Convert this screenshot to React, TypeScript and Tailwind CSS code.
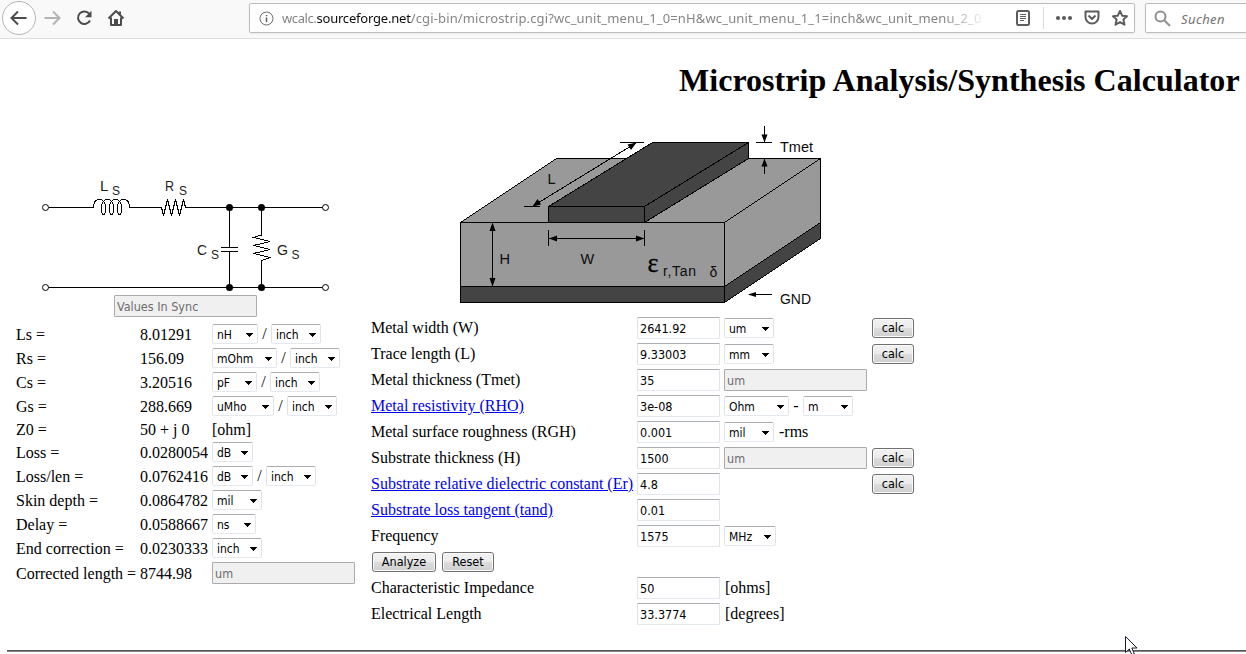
import type { ReactNode } from "react";

const SERIF = "font-['Liberation_Serif',serif]";
const UI = "font-['DejaVu_Sans_Condensed','DejaVu_Sans',sans-serif] text-[12.5px]";
const EDGE = "border border-t-[#abadb3] border-x-[#e2e3ea] border-b-[#e3e9ef]";

function Select({ value, w }: { value: string; w: string }) {
  return (
    <span className={`relative inline-block h-5 shrink-0 ${w}`}>
      <select
        defaultValue={value}
        className={`block h-5 w-full appearance-none rounded-[2px] bg-white pl-1 pt-px leading-[18px] text-black ${EDGE} ${UI} text-[12px]`}
      >
        <option>{value}</option>
      </select>
      <svg className="pointer-events-none absolute right-[5px] top-[9px]" width="7" height="4" viewBox="0 0 7 4" shapeRendering="crispEdges">
        <path d="M0 0H7V1H6V2H5V3H4V4H3V3H2V2H1V1H0Z" fill="#000" />
      </svg>
    </span>
  );
}

function Field({ value }: { value: string }) {
  return (
    <input
      defaultValue={value}
      className={`block h-[22px] w-[83px] shrink-0 rounded-[1px] bg-white px-[2px] text-black ${EDGE} ${UI}`}
    />
  );
}

function Disabled({ value }: { value: string }) {
  return (
    <input
      disabled
      defaultValue={value}
      className={`block h-[22px] w-[143px] shrink-0 rounded-[1px] border border-[#ababab] bg-[#f0f0f0] px-[2px] text-[#6d6d6d] ${UI}`}
    />
  );
}

function Button({ children, w }: { children: ReactNode; w: string }) {
  return (
    <button
      className={`h-5 shrink-0 rounded-[3px] border border-[#707070] bg-[linear-gradient(#f2f2f2,#ebebeb_50%,#dddddd_50%,#cfcfcf)] leading-[18px] text-black shadow-[inset_0_0_0_1px_#fafafa] ${w} ${UI}`}
    >
      {children}
    </button>
  );
}

function Slash({ children = "/" }: { children?: ReactNode }) {
  return <span className="w-[13px] shrink-0 text-center">{children}</span>;
}

type Result = { label: string; value: string; unit: ReactNode; h?: string };

const per = (a: string, w: string) => (
  <>
    <Select value={a} w={w} />
    <Slash />
    <Select value="inch" w="w-[50px]" />
  </>
);

const results: Result[] = [
  { label: "Ls =", value: "8.01291", unit: per("nH", "w-[46px]") },
  { label: "Rs =", value: "156.09", unit: per("mOhm", "w-[65px]") },
  { label: "Cs =", value: "3.20516", unit: per("pF", "w-[45px]") },
  { label: "Gs =", value: "288.669", unit: per("uMho", "w-[62px]") },
  { label: "Z0 =", value: "50 + j 0", unit: <span className="pt-[2px]">[ohm]</span>, h: "h-[22px]" },
  { label: "Loss =", value: "0.0280054", unit: <Select value="dB" w="w-[41px]" /> },
  { label: "Loss/len =", value: "0.0762416", unit: per("dB", "w-[41px]") },
  { label: "Skin depth =", value: "0.0864782", unit: <Select value="mil" w="w-[50px]" /> },
  { label: "Delay =", value: "0.0588667", unit: <Select value="ns" w="w-[44px]" /> },
  { label: "End correction =", value: "0.0230333", unit: <Select value="inch" w="w-[50px]" /> },
  { label: "Corrected length =", value: "8744.98", unit: <Disabled value="um" />, h: "h-[26px]" },
];

type Param = { label: string; value: string; link?: boolean; unit?: ReactNode; calc?: boolean };

const params: Param[] = [
  { label: "Metal width (W)", value: "2641.92", unit: <Select value="um" w="w-[50px]" />, calc: true },
  { label: "Trace length (L)", value: "9.33003", unit: <Select value="mm" w="w-[50px]" />, calc: true },
  { label: "Metal thickness (Tmet)", value: "35", unit: <Disabled value="um" /> },
  {
    label: "Metal resistivity (RHO)",
    value: "3e-08",
    link: true,
    unit: (
      <>
        <Select value="Ohm" w="w-[65px]" />
        <span className="w-[14px] text-center">-</span>
        <Select value="m" w="w-[50px]" />
      </>
    ),
  },
  {
    label: "Metal surface roughness (RGH)",
    value: "0.001",
    unit: (
      <>
        <Select value="mil" w="w-[50px]" />
        <span className="pl-[5px]">-rms</span>
      </>
    ),
  },
  { label: "Substrate thickness (H)", value: "1500", unit: <Disabled value="um" />, calc: true },
  { label: "Substrate relative dielectric constant (Er)", value: "4.8", link: true, calc: true },
  { label: "Substrate loss tangent (tand)", value: "0.01", link: true },
  { label: "Frequency", value: "1575", unit: <Select value="MHz" w="w-[52px]" /> },
];

const outputs: Param[] = [
  { label: "Characteristic Impedance", value: "50", unit: <span className="pl-px">[ohms]</span> },
  { label: "Electrical Length", value: "33.3774", unit: <span className="pl-px">[degrees]</span> },
];

function ParamRow({ p }: { p: Param }) {
  return (
    <div className="flex h-[26px] items-center">
      <span className="w-[266px] shrink-0 whitespace-nowrap">
        {p.link ? (
          <a href="#" className="text-[#0000ee] underline">
            {p.label}
          </a>
        ) : (
          p.label
        )}
      </span>
      <Field value={p.value} />
      <span className="ml-1 flex w-[148px] shrink-0 items-center">{p.unit}</span>
      {p.calc && <Button w="w-[42px]">calc</Button>}
    </div>
  );
}

function Circuit() {
  const coil = [0, 8, 16]
    .map(
      (d) =>
        `C${104 + d} 199.5 ${105.5 + d} 204 ${105.5 + d} 208 C${105.5 + d} 212 ${104.5 + d} 214.5 ${103.5 + d} 214.5 C${102 + d} 214.5 ${101.5 + d} 212 ${101.5 + d} 208 C${101.5 + d} 203 ${103 + d} 199.5 ${107.5 + d} 199.5`
    )
    .join(" ");
  return (
    <svg className="block" width="365" height="180" viewBox="0 115 365 180">
      <g fill="none" stroke="#000" strokeWidth="1">
        <path shapeRendering="crispEdges" d={`M48.5 207.5H93.5C93.5 202 96 199.5 99.5 199.5 ${coil} C127 199.5 129.5 202 129.5 207.5H161.5L163.5 215.5L167.5 199.5L171.5 215.5L175.5 199.5L179.5 215.5L183.5 199.5L185.5 207.5H322.5`} />
        <path d="M48.5 287.5H322.5M229.5 207.5V247.5M221 247.5H238M221 251.5H238M229.5 251.5V287.5" />
        <path shapeRendering="crispEdges" d="M261.5 207.5V235L253.5 237.5L270 241.5L253.5 245.5L270 249.5L253.5 253.5L270 257.5L261.5 260.5V287.5" />
        <g fill="#fff">
          <circle cx="45.5" cy="207.5" r="3" />
          <circle cx="325.5" cy="207.5" r="3" />
          <circle cx="45.5" cy="287.5" r="3" />
          <circle cx="325.5" cy="287.5" r="3" />
        </g>
      </g>
      <circle cx="229.5" cy="207.5" r="3.5" />
      <circle cx="261.5" cy="207.5" r="3.5" />
      <circle cx="229.5" cy="287.5" r="3.5" />
      <circle cx="261.5" cy="287.5" r="3.5" />
      <g fontFamily="Liberation Sans, sans-serif" fontSize="15" fill="#1c1c1c">
        <text x="100" y="191">L</text>
        <text x="165" y="191" textLength="9" lengthAdjust="spacingAndGlyphs">R</text>
        <text x="197" y="255" textLength="10" lengthAdjust="spacingAndGlyphs">C</text>
        <text x="277" y="255" textLength="11" lengthAdjust="spacingAndGlyphs">G</text>
      </g>
      <g fontFamily="Liberation Sans, sans-serif" fontSize="13" fill="#1c1c1c">
        <text x="112" y="195" textLength="8" lengthAdjust="spacingAndGlyphs">S</text>
        <text x="179" y="195" textLength="8" lengthAdjust="spacingAndGlyphs">S</text>
        <text x="211" y="259" textLength="8" lengthAdjust="spacingAndGlyphs">S</text>
        <text x="291.5" y="259" textLength="8" lengthAdjust="spacingAndGlyphs">S</text>
      </g>
    </svg>
  );
}

function Stackup() {
  return (
    <svg className="block" width="560" height="200" viewBox="371 115 560 200">
      <g stroke="#000" strokeWidth="1" strokeLinejoin="round" shapeRendering="crispEdges">
        <path d="M460.5 222.5L556.5 158.5H820.5L724.5 222.5Z" fill="#999" />
        <path d="M460.5 222.5H724.5V286.5H460.5Z" fill="#999" />
        <path d="M724.5 222.5L820.5 158.5V222.5L724.5 286.5Z" fill="#999" />
        <path d="M460.5 286.5H724.5V302.5H460.5Z" fill="#444" />
        <path d="M724.5 286.5L820.5 222.5V238.5L724.5 302.5Z" fill="#444" />
        <path d="M548.5 206.5L652.5 142.5H748.5L644.5 206.5Z" fill="#444" />
        <path d="M548.5 206.5H644.5V222.5H548.5Z" fill="#444" />
        <path d="M644.5 206.5L748.5 142.5V158.5L644.5 222.5Z" fill="#444" />
        <path
          fill="none"
          d="M620 142.5H644M524 206.5H540M533 206L636 143M492.5 224V286M548.5 230V246M644.5 230V246M549 238.5H644M756 142.5H772M764.5 126V142M764.5 159V174M749 294.5H772"
        />
      </g>
      <path d="M636.5 142.5L627.5 144.5L631 150ZM532.5 206.5L541 204.5L537.500 199ZM492.500 222.500L495.500 231H489.500ZM492.500 286.500L495.500 278H489.500ZM549 238.500L557 235.500V241.500ZM644.500 238.500L636 235.500V241.500ZM764.500 142.500L767.500 134.500H761.500ZM764.500 158.500L767.500 166.500H761.500ZM748 294.500L756 292V297Z" />
      <g fontFamily="Liberation Sans, sans-serif" fontSize="14.5" fill="#0c0c0c">
        <text x="547.5" y="184">L</text>
        <text x="499.500" y="264">H</text>
        <text x="580.500" y="264">W</text>
        <text x="780" y="152" textLength="33">Tmet</text>
        <text x="780" y="304" textLength="31" lengthAdjust="spacingAndGlyphs">GND</text>
        <text x="663" y="276" fontSize="14" textLength="33">r,Tan</text>
        <text x="709.500" y="277" fontSize="14">δ</text>
      </g>
      <text x="647.500" y="272" fontFamily="Liberation Serif, serif" fontSize="28" stroke="#000" strokeWidth="0.3" textLength="11" lengthAdjust="spacingAndGlyphs">ε</text>
    </svg>
  );
}

function Toolbar() {
  return (
    <header className="flex h-[39px] w-full border-b border-[#dedede] bg-[#f9f9f9] font-['Noto_Sans',sans-serif] text-[13px]">
      <svg className="block shrink-0" width="249" height="38" viewBox="0 0 249 38" fill="none">
        <circle cx="19" cy="18" r="16.500" fill="#fff" stroke="#b5b5b5" />
        <path d="M26.500 18H12.500M18 11.500L11.500 18L18 24.500" stroke="#4c4c4c" strokeWidth="2" />
        <path d="M44.500 18H58.500M53 11.500L59.500 18L53 24.500" stroke="#b4b4b4" strokeWidth="2" />
        <path d="M89.300 13.800A6.300 6.300 0 1 0 90 20.500" stroke="#4c4c4c" strokeWidth="2" />
        <path d="M91.500 10.800V17.300H85Z" fill="#4c4c4c" />
        <path d="M108.500 18.500L116 11L123.500 18.500M111 17.500V25H121V17.500M120 14V11.500" stroke="#4c4c4c" strokeWidth="2" strokeLinejoin="round" />
        <path d="M114 19h4v6h-4z" fill="#4c4c4c" />
      </svg>
      <div className="mt-[3px] flex h-[30px] w-[886px] shrink-0 items-center rounded-[2px] border border-[#bdbdbd] bg-white shadow-[0_1px_2px_rgba(0,0,0,0.06)]">
        <svg className="ml-[9px] shrink-0" width="15" height="15" viewBox="0 0 15 15" fill="none">
          <circle cx="7.500" cy="7.500" r="6.500" stroke="#6e6e6e" />
          <path d="M7.500 6.500V11M7.500 4V5.300" stroke="#5e5e5e" strokeWidth="1.500" />
        </svg>
        <span className="ml-[8px] w-[700px] shrink-0 overflow-hidden whitespace-nowrap tracking-[0.14px] text-[#858585] [mask-image:linear-gradient(to_right,#000_660px,transparent_706px)]">
          <span className="tracking-[-0.4px]">wcalc.</span>
          <span className="tracking-[-0.2px] text-[#0c0c0d]">sourceforge.net</span>
          /cgi-bin/microstrip.cgi?wc_unit_menu_1_0=nH&amp;wc_unit_menu_1_1=inch&amp;wc_unit_menu_2_0
        </span>
        <svg className="block shrink-0" width="152" height="28" viewBox="982 4 152 28" fill="none" stroke="#5c5c5c">
          <rect x="1017" y="11" width="12" height="14" rx="1.500" strokeWidth="2" />
          <path d="M1020 14.500H1026M1020 16.500H1026M1020 18.500H1026M1020 20.500H1024" />
          <path d="M1043.500 7V29" stroke="#d9d9d9" />
          <path d="M1085.500 11.500H1098.500V17A6.500 6.500 0 0 1 1085.500 17ZM1088.500 15.500L1092 19L1095.500 15.500" strokeWidth="2" strokeLinejoin="round" />
          <path d="M1120 11L1122.200 15.700L1127 16.200L1123.400 19.600L1124.500 24.700L1120 22.200L1115.500 24.700L1116.600 19.600L1113 16.200L1117.800 15.700Z" strokeWidth="2" strokeLinejoin="round" />
          <g fill="#5c5c5c" stroke="none">
            <circle cx="1058" cy="18" r="2.100" />
            <circle cx="1064" cy="18" r="2.100" />
            <circle cx="1070" cy="18" r="2.100" />
          </g>
        </svg>
      </div>
      <div className="ml-[10px] mt-[3px] flex h-[30px] w-[120px] shrink-0 items-center rounded-[2px] border border-[#bdbdbd] bg-white shadow-[0_1px_2px_rgba(0,0,0,0.06)]">
        <svg className="ml-2 shrink-0" width="17" height="17" viewBox="0 0 17 17" fill="none" stroke="#8f8f8f" strokeWidth="2">
          <circle cx="6.500" cy="6.500" r="5" />
          <path d="M10 10L16 16" />
        </svg>
        <span className="ml-[10px] pt-px italic tracking-[0.4px] text-[#737373]">Suchen</span>
      </div>
    </header>
  );
}

export default function App() {
  return (
    <div className={`relative h-[654px] w-[1246px] overflow-hidden bg-white text-[16px] leading-5 text-black ${SERIF}`}>
      <Toolbar />
      <h1 className="h-[76px] whitespace-nowrap pl-[679px] pt-[23px] text-[32px] font-bold leading-[36px] tracking-[0.03px]">
        Microstrip Analysis/Synthesis Calculator
      </h1>
      <main className="flex">
        <section className="w-[371px] shrink-0">
          <Circuit />
          <div className="mb-[5px] pl-[114px]">
            <Disabled value="Values In Sync" />
          </div>
          {results.map((r) => (
            <div key={r.label} className={`flex items-center whitespace-nowrap pl-4 ${r.h ?? "h-6"}`}>
              <span className="w-[124px] shrink-0 pt-[2px]">{r.label}</span>
              <span className="w-[72px] shrink-0 pt-[2px]">{r.value}</span>
              {r.unit}
            </div>
          ))}
        </section>
        <section>
          <Stackup />
          {params.map((p) => (
            <ParamRow key={p.label} p={p} />
          ))}
          <div className="flex h-[26px] items-center gap-[6px] pl-px">
            <Button w="w-[64px]">Analyze</Button>
            <Button w="w-[52px]">Reset</Button>
          </div>
          {outputs.map((p) => (
            <ParamRow key={p.label} p={p} />
          ))}
        </section>
      </main>
      <hr className="ml-[7px] mt-[23px] h-[2px] border-0 border-t border-t-[#555] bg-[#8a8a8a]" />
      <svg className="absolute left-[1125px] top-[636px]" width="13" height="20" viewBox="0 0 13 20">
        <path d="M0.500 0.500V16.500L4.300 13L6.800 18.800L9.300 17.700L6.800 12H12Z" fill="#fff" stroke="#1a1a2e" />
      </svg>
    </div>
  );
}
